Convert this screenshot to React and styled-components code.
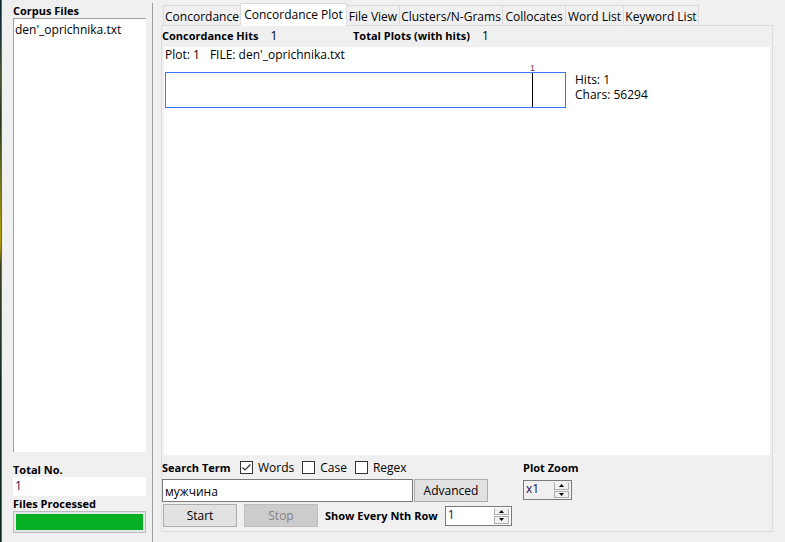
import React, { useState } from 'react';
import styled, { createGlobalStyle, css } from 'styled-components';

const GlobalStyle = createGlobalStyle`
  *, *::before, *::after { box-sizing: border-box; }
  body { margin: 0; background: #f0f0f0; }
  body, button, input {
    font-family: "Open Sans", "Noto Sans", sans-serif;
    font-size: 12px;
    line-height: 16px;
    color: #000;
  }
`;

const Window = styled.div`
  display: flex;
  min-height: 100vh;
  background: #f0f0f0;
`;

const DesktopEdge = styled.div`
  flex: none;
  width: 2px;
  border-right: 1px solid #1c78b8;
  background: linear-gradient(#0b2733 0, #16323a 6%, #4b5630 14%, #23331c 22%, #6d7420 32%, #a89a10 42%, #b09a12 45%, #3c4120 49%, #2a3a2a 60%, #0c2a20 72%, #06251e 100%);
`;

const Sidebar = styled.aside`
  flex: none;
  display: flex;
  flex-direction: column;
  width: 151px;
  margin: 3px 0 0;
  padding: 0 6px 9px 11px;
  border-right: 1px solid #a0a0a0;
`;

const Heading = styled.h2`
  margin: 0;
  font-size: 11px;
  line-height: 15px;
  font-weight: 700;
  white-space: nowrap;
`;

const FileList = styled.ul`
  flex: 1;
  margin: 0 0 10px;
  padding: 3px 1px;
  list-style: none;
  background: #fff;
  border-top: 1px solid #a0a0a0;
  border-left: 1px solid #a0a0a0;
`;

const Total = styled.output`
  height: 19px;
  padding: 1px 2px;
  background: #fff;
  color: #2b0a4a;
`;

const Progress = styled.div`
  height: 22px;
  padding: 2px;
  border: 1px solid #bcbcbc;
  background: #e6e6e6;
`;

const ProgressFill = styled.div`
  height: 100%;
  background: #06b025;
`;

const Main = styled.main`
  flex: 1;
  min-width: 0;
  display: flex;
  flex-direction: column;
  padding: 3px 12px 10px 8px;
`;

const TabList = styled.div`
  display: flex;
  align-items: flex-end;
  height: 23px;
  padding-left: 2px;
  margin-bottom: -1px;
`;

const Tab = styled.button`
  width: ${p => p.$width}px;
  height: 21px;
  margin: 0 0 0 -1px;
  padding: 2px 0 0;
  border: 1px solid #d9d9d9;
  background: #f0f0f0;
  white-space: nowrap;
  &:first-child { margin-left: 0; }
  ${p => p['aria-selected'] && css`
    position: relative;
    height: 23px;
    padding: 1px 0;
    border-bottom-color: #fff;
    background: #fff;
  `}
`;

const Panel = styled.section`
  flex: 1;
  display: flex;
  flex-direction: column;
  border: 1px solid #dcdcdc;
  padding-bottom: 4px;
`;

const Stats = styled.div`
  display: flex;
  height: 21px;
  padding-bottom: 2px;
  align-items: center;
`;

const Stat = styled.div`
  display: flex;
  align-items: center;
  gap: 12px;
  width: ${p => p.$width}px;
`;

const PlotArea = styled.div`
  flex: 1;
  margin: 0 2px;
  padding: 0 1px;
  background: #fff;
`;

const PlotTitle = styled.div`
  display: flex;
  gap: 10px;
  height: 25px;
`;

const PlotRow = styled.div`
  display: flex;
  gap: 9px;
`;

const PlotBar = styled.div`
  position: relative;
  width: 401px;
  height: 36px;
  border: 1px solid #3a74f0;
`;

const Hit = styled.div`
  position: absolute;
  top: 0;
  bottom: 0;
  width: 1px;
  background: #000;
`;

const HitCount = styled.span`
  position: absolute;
  bottom: 100%;
  left: -2px;
  font-family: "Liberation Sans", sans-serif;
  font-size: 9px;
  line-height: 9px;
  color: #5a3a6a;
`;

const PlotInfo = styled.div`
  display: flex;
  flex-direction: column;
  line-height: 15px;
`;

const Controls = styled.form`
  display: flex;
  gap: 10px;
  padding-top: 4px;
`;

const SearchGroup = styled.div`
  display: flex;
  flex-direction: column;
  width: 351px;
`;

const Options = styled.div`
  display: flex;
  align-items: center;
  height: 20px;
  padding-bottom: 3px;
`;

const SearchHeading = styled(Heading)`
  width: 78px;
`;

const Check = styled.label`
  display: flex;
  align-items: center;
  gap: 5px;
  margin-right: 8px;
`;

const CheckBox = styled.input`
  appearance: none;
  width: 13px;
  height: 13px;
  margin: 0;
  border: 1px solid #333;
  background: #fff;
  &:checked {
    background: #fff url("data:image/svg+xml,%3Csvg xmlns='http://www.w3.org/2000/svg' viewBox='0 0 11 11'%3E%3Cpath d='M1.5 5.5 4 8 9.5 2.5' fill='none' stroke='%23333' stroke-width='1.2'/%3E%3C/svg%3E");
  }
`;

const SearchLine = styled.div`
  display: flex;
  gap: 1px;
`;

const SearchInput = styled.input`
  width: 251px;
  height: 23px;
  padding: 1px 2px 0;
  border: 1px solid #7a7a7a;
  border-radius: 0;
  background: #fff;
`;

const Button = styled.button`
  width: 74px;
  height: 23px;
  padding: 0;
  border: 1px solid #adadad;
  background: #e1e1e1;
  &:disabled {
    border-color: #bfbfbf;
    background: #ccc;
    color: #838383;
  }
`;

const ActionLine = styled.div`
  display: flex;
  align-items: center;
  gap: 7px;
  padding: 2px 1px 0;
`;

const ZoomGroup = styled.div`
  display: flex;
  flex-direction: column;
  gap: 3px;
`;

const ZoomHeading = styled(Heading)`
  line-height: 18px;
`;

const Spin = styled.div`
  display: flex;
  width: ${p => p.$width}px;
  height: 20px;
  padding-right: 2px;
  border: 1px solid #7a7a7a;
  background: ${p => (p.$muted ? '#f0f0f0' : '#fff')};
`;

const SpinInput = styled.input`
  flex: 1;
  min-width: 0;
  padding: 0 2px 2px;
  border: 0;
  background: transparent;
  color: #2b0a4a;
`;

const SpinButtons = styled.div`
  display: flex;
  flex-direction: column;
  gap: 1px;
  padding: 1px 0;
`;

const SpinButton = styled.button`
  display: flex;
  align-items: center;
  justify-content: center;
  width: 15px;
  flex: 1;
  padding: 0;
  border: 1px solid #adadad;
  background: #f0f0f0;
  &:first-child { border-top-color: #f0f0f0; }
`;

const tabs = [
  { name: 'Concordance', width: 78 },
  { name: 'Concordance Plot', width: 107 },
  { name: 'File View', width: 54 },
  { name: 'Clusters/N-Grams', width: 104 },
  { name: 'Collocates', width: 64 },
  { name: 'Word List', width: 59 },
  { name: 'Keyword List', width: 76 },
];

function Spinner({ id, label, width, value, muted }) {
  return (
    <Spin $width={width} $muted={muted}>
      <SpinInput id={id} defaultValue={value} />
      <SpinButtons>
        <SpinButton type="button" aria-label={`${label} up`}>
          <svg width="5" height="3" viewBox="0 0 5 3"><path d="M0 3h5L2.5 0z" /></svg>
        </SpinButton>
        <SpinButton type="button" aria-label={`${label} down`}>
          <svg width="5" height="3" viewBox="0 0 5 3"><path d="M0 0h5L2.5 3z" /></svg>
        </SpinButton>
      </SpinButtons>
    </Spin>
  );
}

export default function App() {
  const [active, setActive] = useState('Concordance Plot');
  const hits = [{ at: 366, count: 1 }];
  return (
    <>
      <GlobalStyle />
      <Window>
        <DesktopEdge />
        <Sidebar>
          <Heading>Corpus Files</Heading>
          <FileList><li>den'_oprichnika.txt</li></FileList>
          <Heading>Total No.</Heading>
          <Total>1</Total>
          <Heading>Files Processed</Heading>
          <Progress role="progressbar" aria-label="Files Processed" aria-valuenow={100}><ProgressFill /></Progress>
        </Sidebar>
        <Main>
          <TabList role="tablist">
            {tabs.map(t => (
              <Tab key={t.name} role="tab" $width={t.width} aria-selected={t.name === active} onClick={() => setActive(t.name)}>{t.name}</Tab>
            ))}
          </TabList>
          <Panel>
            <Stats>
              <Stat $width={191}><Heading>Concordance Hits</Heading>1</Stat>
              <Stat><Heading>Total Plots (with hits)</Heading>1</Stat>
            </Stats>
            <PlotArea>
              <PlotTitle><span>Plot: 1</span><span>FILE: den'_oprichnika.txt</span></PlotTitle>
              <PlotRow>
                <PlotBar>
                  {hits.map(h => (
                    <Hit key={h.at} style={{ left: h.at }}><HitCount>{h.count}</HitCount></Hit>
                  ))}
                </PlotBar>
                <PlotInfo>
                  <span>Hits: 1</span>
                  <span>Chars: 56294</span>
                </PlotInfo>
              </PlotRow>
            </PlotArea>
            <Controls onSubmit={e => e.preventDefault()}>
              <SearchGroup>
                <Options>
                  <SearchHeading as="label" htmlFor="search-term">Search Term</SearchHeading>
                  <Check><CheckBox type="checkbox" defaultChecked />Words</Check>
                  <Check><CheckBox type="checkbox" />Case</Check>
                  <Check><CheckBox type="checkbox" />Regex</Check>
                </Options>
                <SearchLine>
                  <SearchInput id="search-term" defaultValue="мужчина" />
                  <Button type="button">Advanced</Button>
                </SearchLine>
                <ActionLine>
                  <Button type="submit">Start</Button>
                  <Button type="button" disabled>Stop</Button>
                  <Heading as="label" htmlFor="nth-row">Show Every Nth Row</Heading>
                  <Spinner id="nth-row" label="Show Every Nth Row" width={67} value="1" />
                </ActionLine>
              </SearchGroup>
              <ZoomGroup>
                <ZoomHeading as="label" htmlFor="plot-zoom">Plot Zoom</ZoomHeading>
                <Spinner id="plot-zoom" label="Plot Zoom" width={49} value="x1" muted />
              </ZoomGroup>
            </Controls>
          </Panel>
        </Main>
      </Window>
    </>
  );
}
